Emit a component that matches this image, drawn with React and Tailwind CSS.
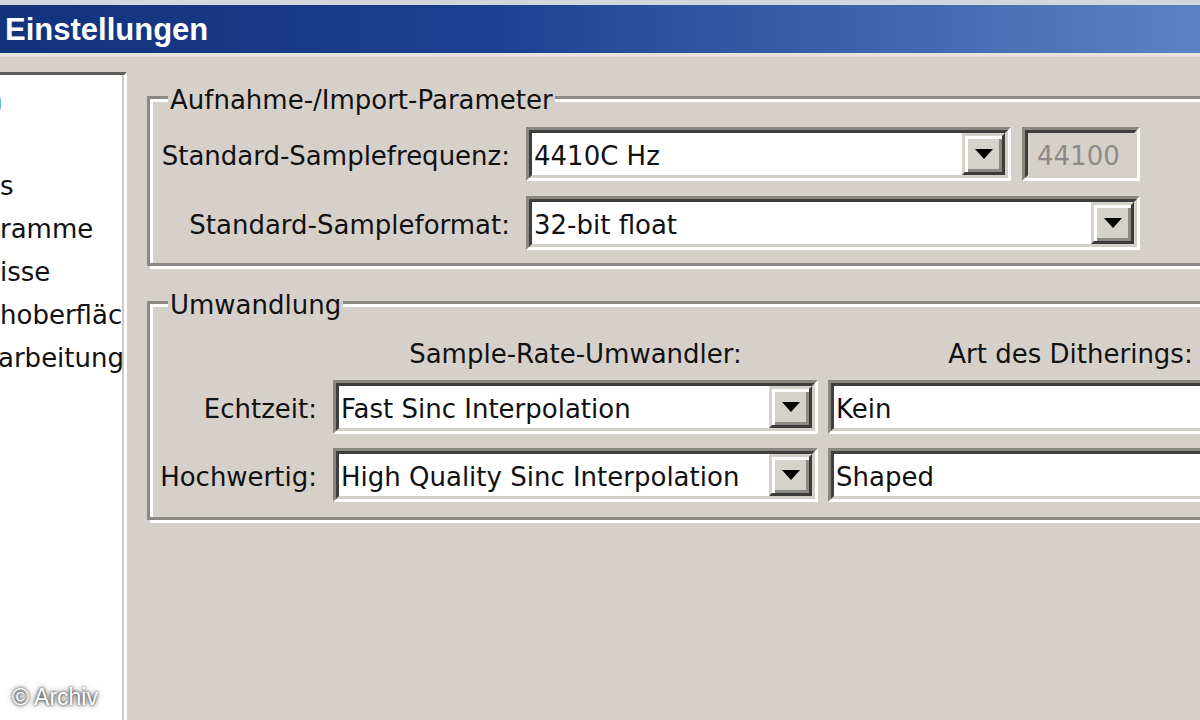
import React from "react";

function Arrow() {
  return (
    <svg width="18" height="10" viewBox="0 0 18 10">
      <path d="M0 0H18L9 10Z" fill="#000" />
    </svg>
  );
}

function DropBtn() {
  return (
    <div className="w-[43px] shrink-0 flex items-center justify-center bg-[#d5d1cb] border-[3px] border-t-[#d5d1cb] border-l-[#d5d1cb] border-r-[#3b3b3b] border-b-[#3b3b3b] shadow-[inset_3px_3px_0_#ffffff,inset_-3px_-3px_0_#8b8986]">
      <Arrow />
    </div>
  );
}

function Sunken({ className, inner, children }) {
  return (
    <div className={`shrink-0 h-[54px] border-[3px] border-t-[#8a8783] border-l-[#8a8783] border-r-white border-b-white ${className}`}>
      <div className={`h-full flex border-[3px] border-t-[#3e3e3e] border-l-[#3e3e3e] border-r-[#d4d0c8] border-b-[#d4d0c8] ${inner}`}>
        {children}
      </div>
    </div>
  );
}

function Combo({ className, text }) {
  return (
    <Sunken className={className} inner="bg-white">
      <div className="flex-1 flex items-center pl-[2px] pt-[4px] whitespace-nowrap overflow-hidden">{text}</div>
      <DropBtn />
    </Sunken>
  );
}

export default function App() {
  return (
    <div className="relative w-[1200px] h-[720px] overflow-hidden bg-[#d6d0cb] flex flex-col font-['DejaVu_Sans',sans-serif] text-[26px] text-[#111]">
      <div className="h-[5px] shrink-0 bg-[#d3d6da]" />
      <div className="h-[48px] shrink-0 flex items-center pl-[5px] bg-[linear-gradient(to_right,#12327c,#1c4090_40%,#5b82c7)]">
        <span className="font-['Liberation_Sans',sans-serif] font-bold text-[31px] text-white leading-none">Einstellungen</span>
      </div>
      <div className="h-[4px] shrink-0 bg-[#e6e3de]" />

      <div className="flex flex-1 min-h-0">
        {/* left category list */}
        <div className="mt-[15px] w-[127px] shrink-0 bg-white border-t-[3px] border-t-[#5f5d5a] border-r-[3px] border-r-white shadow-[inset_-2px_0_0_#cdc9c3] overflow-hidden pt-[4px] leading-[43px] whitespace-nowrap text-[#111]">
          <div className="-ml-[14px]">n</div>
          <div>&nbsp;</div>
          <div>s</div>
          <div>ramme</div>
          <div>isse</div>
          <div>hoberfläche</div>
          <div className="-ml-[2px]">arbeitung</div>
          <div className="-ml-[13px]">r</div>
        </div>

        {/* right settings */}
        <div className="ml-[20px] pt-[24px] flex flex-col shrink-0">
          <fieldset className="w-[1200px] border-[3px] border-[#8a8784] shadow-[inset_3px_3px_0_#ffffff,3px_3px_0_#ffffff] pb-[13px]">
            <legend className="ml-[18px] px-[2px] bg-[#d6d0cb] pt-[6px] leading-[26px]">Aufnahme-/Import-Parameter</legend>
            <div className="mt-[14px] flex flex-col gap-[15px]">
              <div className="flex items-center">
                <div className="w-[360px] shrink-0 pt-[4px] text-right whitespace-nowrap">Standard-Samplefrequenz:</div>
                <Combo className="ml-[16px] w-[485px]" text="4410C Hz" />
                <Sunken className="ml-[11px] w-[118px]" inner="bg-[#d6d0cb] items-center pl-[9px] pt-[4px] text-[#8c8a88]">44100</Sunken>
              </div>
              <div className="flex items-center">
                <div className="w-[360px] shrink-0 pt-[4px] text-right whitespace-nowrap">Standard-Sampleformat:</div>
                <Combo className="ml-[16px] w-[614px]" text="32-bit float" />
              </div>
            </div>
          </fieldset>

          <fieldset className="mt-[20px] w-[1200px] border-[3px] border-[#8a8784] shadow-[inset_3px_3px_0_#ffffff,3px_3px_0_#ffffff] pb-[15px]">
            <legend className="ml-[18px] px-[2px] bg-[#d6d0cb] pt-[6px] leading-[26px]">Umwandlung</legend>
            <div className="mt-[21px] flex leading-[30px] whitespace-nowrap">
              <div className="w-[183px] shrink-0" />
              <div className="w-[485px] shrink-0 text-center">Sample-Rate-Umwandler:</div>
              <div className="ml-[10px] w-[485px] shrink-0 text-center">Art des Ditherings:</div>
            </div>
            <div className="mt-[11px] flex flex-col gap-[14px]">
              <div className="flex items-center">
                <div className="w-[167px] shrink-0 pt-[4px] text-right whitespace-nowrap">Echtzeit:</div>
                <Combo className="ml-[16px] w-[485px]" text="Fast Sinc Interpolation" />
                <Combo className="ml-[10px] w-[485px]" text="Kein" />
              </div>
              <div className="flex items-center">
                <div className="w-[167px] shrink-0 pt-[4px] text-right whitespace-nowrap">Hochwertig:</div>
                <Combo className="ml-[16px] w-[485px]" text="High Quality Sinc Interpolation" />
                <Combo className="ml-[10px] w-[485px]" text="Shaped" />
              </div>
            </div>
          </fieldset>
        </div>
      </div>

      <div className="absolute left-[12px] top-[686px] font-['Liberation_Sans',sans-serif] text-[23px] leading-none text-white [text-shadow:0_0_3px_rgba(0,0,0,0.9),0_0_6px_rgba(0,0,0,0.6)]">
        © Archiv
      </div>
    </div>
  );
}
